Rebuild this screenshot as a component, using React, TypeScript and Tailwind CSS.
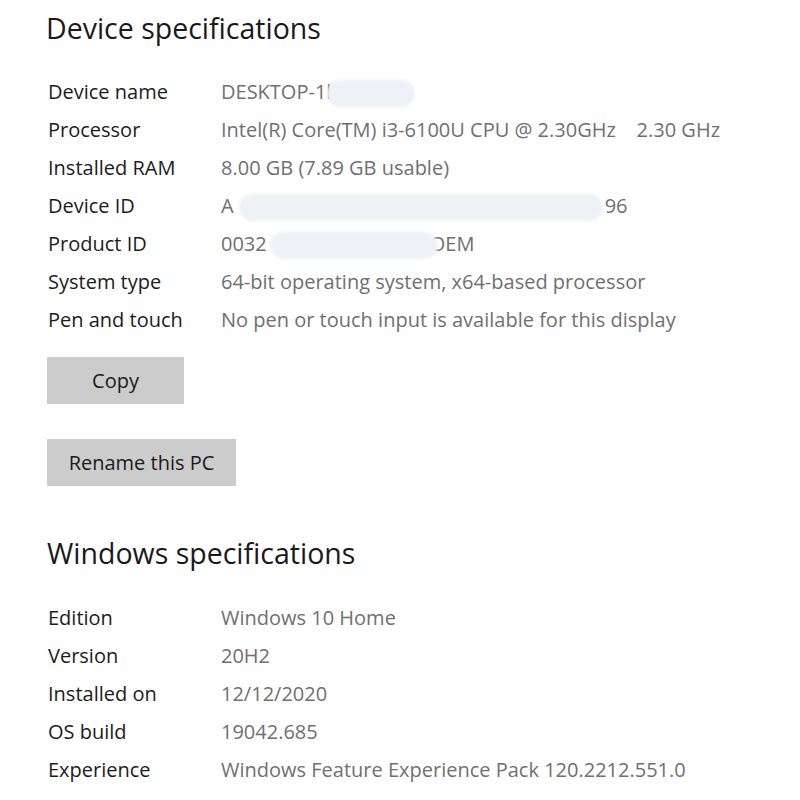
import React from 'react';

type Row = { label: string; value: React.ReactNode };

// redacted part of a value: a soft pale blob over the text
const Blur: React.FC<{ w: string; cls?: string }> = ({ w, cls }) => (
  <span
    className={`relative z-10 inline-block h-[27px] align-middle rounded-full bg-[#eef2f6] blur-[1.5px] ${w} ${cls ?? ''}`}
  />
);

const deviceRows: Row[] = [
  {
    label: 'Device name',
    value: (
      <>
        DESKTOP-1l
        <Blur w="w-[88px]" cls="-ml-[4px]" />
      </>
    ),
  },
  {
    label: 'Processor',
    value: <span className="whitespace-pre">Intel(R) Core(TM) i3-6100U CPU @ 2.30GHz    2.30 GHz</span>,
  },
  { label: 'Installed RAM', value: '8.00 GB (7.89 GB usable)' },
  {
    label: 'Device ID',
    value: (
      <>
        A
        <Blur w="w-[364px]" cls="ml-[5px] mr-[2px]" />
        96
      </>
    ),
  },
  {
    label: 'Product ID',
    value: (
      <>
        0032
        <Blur w="w-[168px]" cls="ml-[3px] -mr-[8px]" />
        OEM
      </>
    ),
  },
  { label: 'System type', value: '64-bit operating system, x64-based processor' },
  { label: 'Pen and touch', value: 'No pen or touch input is available for this display' },
];

const windowsRows: Row[] = [
  { label: 'Edition', value: 'Windows 10 Home' },
  { label: 'Version', value: '20H2' },
  { label: 'Installed on', value: '12/12/2020' },
  { label: 'OS build', value: '19042.685' },
  { label: 'Experience', value: 'Windows Feature Experience Pack 120.2212.551.0' },
];

const SpecTable: React.FC<{ rows: Row[] }> = ({ rows }) => (
  <div className="flex flex-col pl-[2px]">
    {rows.map((r) => (
      <div key={r.label} className="flex h-[38px] items-center text-[20px]">
        <div className="w-[173px] shrink-0 text-[#1c1c1c]">{r.label}</div>
        <div className="text-[#707070] whitespace-nowrap">{r.value}</div>
      </div>
    ))}
  </div>
);

export default function App() {
  return (
    <div
      className="min-h-[800px] w-[800px] bg-white pl-[46px] pt-[8px]"
      style={{ fontFamily: '"Open Sans", "Noto Sans", sans-serif' }}
    >
      <h1 className="text-[28.5px] leading-[40px] font-normal text-[#1a1a1a]">Device specifications</h1>

      <div className="mt-[25px]">
        <SpecTable rows={deviceRows} />
      </div>

      <div className="mt-[18px] flex flex-col items-start pl-[1px]">
        <button className="h-[47px] w-[137px] bg-[#cccccc] text-[20px] text-[#1a1a1a]">Copy</button>
        <button className="mt-[35px] h-[47px] w-[189px] bg-[#cccccc] text-[20px] text-[#1a1a1a]">
          Rename this PC
        </button>
      </div>

      <h2 className="mt-[47px] text-[28.5px] leading-[40px] font-normal text-[#1a1a1a] pl-[1px]">
        Windows specifications
      </h2>

      <div className="mt-[26px]">
        <SpecTable rows={windowsRows} />
      </div>
    </div>
  );
}
